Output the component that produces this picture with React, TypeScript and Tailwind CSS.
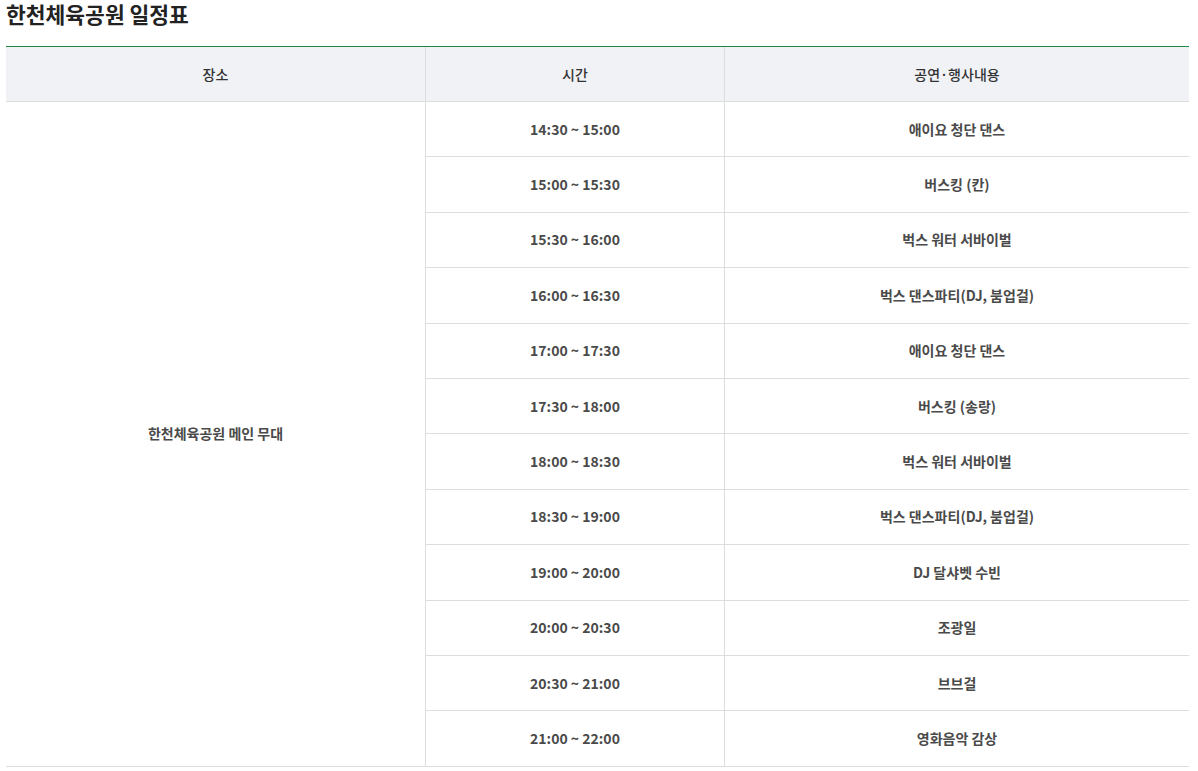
const rows: { time: string; title: string }[] = [
  { time: "14:30 ~ 15:00", title: "애이요 청단 댄스" },
  { time: "15:00 ~ 15:30", title: "버스킹 (칸)" },
  { time: "15:30 ~ 16:00", title: "벅스 워터 서바이벌" },
  { time: "16:00 ~ 16:30", title: "벅스 댄스파티(DJ, 붐업걸)" },
  { time: "17:00 ~ 17:30", title: "애이요 청단 댄스" },
  { time: "17:30 ~ 18:00", title: "버스킹 (송랑)" },
  { time: "18:00 ~ 18:30", title: "벅스 워터 서바이벌" },
  { time: "18:30 ~ 19:00", title: "벅스 댄스파티(DJ, 붐업걸)" },
  { time: "19:00 ~ 20:00", title: "DJ 달샤벳 수빈" },
  { time: "20:00 ~ 20:30", title: "조광일" },
  { time: "20:30 ~ 21:00", title: "브브걸" },
  { time: "21:00 ~ 22:00", title: "영화음악 감상" },
];

export default function App() {
  return (
    <div className="bg-white w-[1198px] h-[771px] overflow-hidden px-[6px] font-['Noto_Sans_CJK_KR','Noto_Sans',sans-serif]">
      <h2 className="text-[21.5px] leading-[27px] font-bold text-[#222]">한천체육공원 일정표</h2>

      <div className="mt-[19px] w-[1183px] border-t border-[#1f8a45]">
        {/* header */}
        <div className="grid grid-cols-[420px_299px_464px] h-[55px] bg-[#f0f2f6] border-b border-[#dddddd] text-[14px] font-medium text-[#333]">
          <div className="flex items-center justify-center border-r border-[#dddddd]">장소</div>
          <div className="flex items-center justify-center border-r border-[#dddddd]">시간</div>
          <div className="flex items-center justify-center">공연·행사내용</div>
        </div>

        {/* body */}
        <div className="grid grid-cols-[420px_763px] text-[14px] font-semibold text-[#4a4a4a]">
          <div className="flex items-center justify-center border-r border-b border-[#dddddd]">
            한천체육공원 메인 무대
          </div>
          <div className="flex flex-col">
            {rows.map((r, i) => (
              <div
                key={i}
                className="grid grid-cols-[299px_464px] h-[55.4px] border-b border-[#dddddd]"
              >
                <div className="flex items-center justify-center border-r border-[#dddddd]">{r.time}</div>
                <div className="flex items-center justify-center">{r.title}</div>
              </div>
            ))}
          </div>
        </div>
      </div>
    </div>
  );
}
